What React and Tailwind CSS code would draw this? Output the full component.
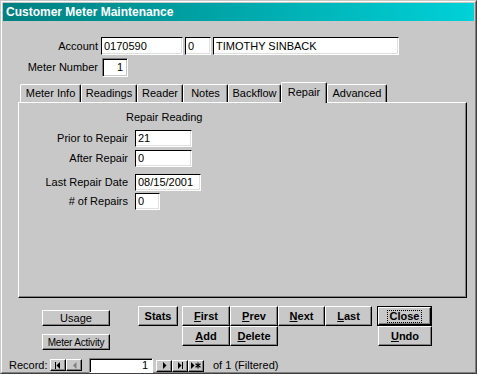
import React from "react";

const raised =
  "border border-t-white border-l-white border-r-black border-b-black shadow-[inset_-1px_-1px_0_#808080]";
const sunken =
  "bg-white border border-t-black border-l-black border-r-white border-b-white shadow-[inset_-1px_-1px_0_#dfdfdf]";

function Field({ w, value, right, h = "h-[18px]" }) {
  return (
    <div
      className={`${sunken} ${h} flex items-center ${right ? "justify-end pr-[3px]" : "pl-[2px]"} text-black leading-none`}
      style={{ width: w }}
    >
      {value}
    </div>
  );
}

function Tab({ label, w, sel }) {
  if (sel) {
    return (
      <div
        className="relative z-10 h-[21px] -mb-[1px] bg-[#c8c8c8] border-t border-l border-r border-t-white border-l-white border-r-black rounded-t-[2px] shadow-[inset_-1px_0_0_#808080] flex items-center justify-center pb-[2px]"
        style={{ width: w }}
      >
        {label}
      </div>
    );
  }
  return (
    <div
      className="h-[18px] border-t border-l border-r border-t-white border-l-white border-r-black rounded-t-[2px] shadow-[inset_-1px_0_0_#808080] flex items-center justify-center"
      style={{ width: w }}
    >
      {label}
    </div>
  );
}

function Btn({ w, h = "h-[20px]", bold = true, children }) {
  return (
    <div
      className={`${raised} ${h} flex items-center justify-center whitespace-nowrap ${bold ? "font-bold" : ""}`}
      style={{ width: w }}
    >
      {children}
    </div>
  );
}

function NavBtn({ children }) {
  return (
    <div className={`${raised} w-[16px] h-[12px] flex items-center justify-center self-start mt-[1px]`}>
      {children}
    </div>
  );
}

function Row({ label, w, value, mt }) {
  return (
    <div className={`flex items-center h-[17px] ${mt}`}>
      <div className="w-[109px] text-right">{label}</div>
      <div className="ml-[7px]">
        <Field w={w} value={value} h="h-[17px]" />
      </div>
    </div>
  );
}

export default function App() {
  const tabs = [
    ["Meter Info", 61],
    ["Readings", 56],
    ["Reader", 46],
    ["Notes", 45],
    ["Backflow", 53],
    ["Repair", 46, true],
    ["Advanced", 60],
  ];
  return (
    <div className="w-[477px] h-[374px] overflow-hidden bg-[#c8c8c8] font-['Liberation_Sans',Arial,sans-serif] text-[11px] text-black leading-[13px]">
      <div className="w-full h-full border border-t-[#c8c8c8] border-l-[#c8c8c8] border-r-[#404040] border-b-[#404040]">
        <div className="w-full h-full border border-t-white border-l-white border-r-[#808080] border-b-[#808080] pt-[1px] px-[1px] flex flex-col">
          {/* title bar */}
          <div className="h-[18px] shrink-0 bg-gradient-to-r from-[#008080] to-[#00d2d8] flex items-center pl-[3px]">
            <span className="text-white font-bold text-[12px] leading-none">Customer Meter Maintenance</span>
          </div>

          {/* account row */}
          <div className="flex items-center mt-[16px] h-[18px]">
            <div className="w-[95px] text-right">Account</div>
            <div className="ml-[3px] flex gap-[2px]">
              <Field w={82} value="0170590" />
              <Field w={26} value="0" />
              <Field w={186} value="TIMOTHY SINBACK" />
            </div>
          </div>

          {/* meter number */}
          <div className="flex items-center mt-[3px] h-[19px]">
            <div className="w-[95px] text-right">Meter Number</div>
            <div className="ml-[4px]">
              <div className="w-[26px] h-[19px] bg-white border border-t-[#808080] border-l-[#808080] border-r-white border-b-white shadow-[inset_1px_1px_0_#000,inset_-1px_-1px_0_#c8c8c8] flex items-center justify-end pr-[4px]">
                1
              </div>
            </div>
          </div>

          {/* tabs */}
          <div className="flex items-end h-[20px] mt-[5px] ml-[17px]">
            {tabs.map(([l, w, s]) => (
              <Tab key={l} label={l} w={w} sel={s} />
            ))}
          </div>

          {/* panel */}
          <div className="ml-[15px] w-[449px] h-[196px] shrink-0 border border-t-white border-l-white border-r-black border-b-black shadow-[inset_-1px_-1px_0_#808080] pt-[8px]">
            <div className="ml-[107px]">Repair Reading</div>
            <Row label="Prior to Repair" w={57} value="21" mt="mt-[6px]" />
            <Row label="After Repair" w={57} value="0" mt="mt-[3px]" />
            <Row label="Last Repair Date" w={66} value="08/15/2001" mt="mt-[7px]" />
            <Row label="# of Repairs" w={25} value="0" mt="mt-[2px]" />
          </div>

          {/* buttons */}
          <div className="flex mt-[8px] shrink-0">
            <div className="ml-[39px] pt-[4px] flex flex-col gap-[8px]">
              <Btn w={68} h="h-[16px]" bold={false}>Usage</Btn>
              <Btn w={68} h="h-[16px]" bold={false}>
                <span className="text-[10px] tracking-[-0.2px]">Meter Activity</span>
              </Btn>
            </div>
            <div className="ml-[28px]">
              <Btn w={40}>Stats</Btn>
            </div>
            <div className="ml-[4px] flex flex-col">
              <div className="flex">
                <Btn w={48}><span><u>F</u>irst</span></Btn>
                <Btn w={48}><span><u>P</u>rev</span></Btn>
                <Btn w={47}><span><u>N</u>ext</span></Btn>
                <Btn w={47}><span><u>L</u>ast</span></Btn>
              </div>
              <div className="flex">
                <Btn w={48}><span><u>A</u>dd</span></Btn>
                <Btn w={48}><span><u>D</u>elete</span></Btn>
              </div>
            </div>
            <div className="ml-[5px] flex flex-col">
              <div className="w-[55px] h-[20px] border border-black">
                <div className={`${raised} w-full h-full flex items-center justify-center font-bold`}>
                  <span className="border border-dotted border-black px-[2px] leading-[11px]">Close</span>
                </div>
              </div>
              <div className="ml-[1px]">
                <Btn w={54}><span><u>U</u>ndo</span></Btn>
              </div>
            </div>
          </div>

          {/* record bar */}
          <div className="flex items-center h-[14px] mt-[8px] shrink-0">
            <div className="ml-[6px] w-[41px]">Record:</div>
            <NavBtn>
              <svg width="9" height="7" viewBox="0 0 9 7">
                <rect x="1" y="0" width="1" height="7" fill="#000" />
                <polygon points="2.5,3.5 6,0 6,7" fill="#000" />
              </svg>
            </NavBtn>
            <NavBtn>
              <svg width="9" height="7" viewBox="0 0 9 7">
                <polygon points="3,3.5 6.5,0 6.5,7" fill="#808080" />
              </svg>
            </NavBtn>
            <div className="ml-[7px] w-[64px] h-[15px] bg-white border border-t-[#808080] border-l-[#808080] border-r-white border-b-white shadow-[inset_1px_1px_0_#000] flex items-center justify-end pr-[4px]">
              1
            </div>
            <div className="ml-[3px] flex">
              <NavBtn>
                <svg width="9" height="7" viewBox="0 0 9 7">
                  <polygon points="3,0 3,7 6.5,3.5" fill="#000" />
                </svg>
              </NavBtn>
              <NavBtn>
                <svg width="9" height="7" viewBox="0 0 9 7">
                  <polygon points="2,0 2,7 5.5,3.5" fill="#000" />
                  <rect x="6" y="0" width="1" height="7" fill="#000" />
                </svg>
              </NavBtn>
              <NavBtn>
                <svg width="12" height="7" viewBox="0 0 12 7">
                  <polygon points="1,0 1,7 4.5,3.5" fill="#000" />
                  <line x1="8" y1="0.5" x2="8" y2="6.5" stroke="#000" strokeWidth="1.2" />
                  <line x1="5.5" y1="1.8" x2="10.5" y2="5.2" stroke="#000" strokeWidth="1.2" />
                  <line x1="5.5" y1="5.2" x2="10.5" y2="1.8" stroke="#000" strokeWidth="1.2" />
                </svg>
              </NavBtn>
            </div>
            <div className="ml-[9px]">of 1 (Filtered)</div>
          </div>
        </div>
      </div>
    </div>
  );
}
